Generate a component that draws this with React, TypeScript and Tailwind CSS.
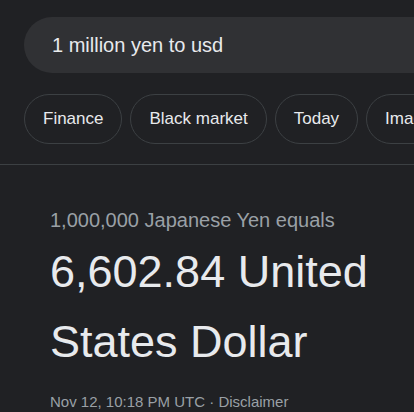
export default function App() {
  const chips = ["Finance", "Black market", "Today", "Images"];
  return (
    <div className="h-[412px] w-[414px] overflow-hidden bg-[#202124] font-['Liberation_Sans',Arial,sans-serif]">
      <div className="flex pl-6 pt-[17px]">
        <div className="flex h-14 w-[500px] shrink-0 items-center rounded-full bg-[#303134] pl-7 text-[20px] text-[#e8eaed]">
          1 million yen to usd
        </div>
      </div>
      <div className="mt-[21px] flex gap-2 pl-6">
        {chips.map((c) => (
          <div
            key={c}
            className="flex h-[50px] shrink-0 items-center rounded-full border border-[#3c4043] px-[18px] text-[17px] text-[#e8eaed]"
          >
            {c}
          </div>
        ))}
      </div>
      <div className="mt-5 h-px bg-[#3c4043]" />
      <div className="pl-[50px] pt-[41px]">
        <div className="text-[20px] leading-7 text-[#9aa0a6]">
          1,000,000 Japanese Yen equals
        </div>
        <div className="mt-[3px] text-[45px] leading-[70px] text-[#e8eaed]">
          6,602.84 United States Dollar
        </div>
        <div className="mt-[15px] text-[15px] leading-5 text-[#9aa0a6]">
          Nov 12, 10:18 PM UTC · Disclaimer
        </div>
      </div>
    </div>
  );
}
